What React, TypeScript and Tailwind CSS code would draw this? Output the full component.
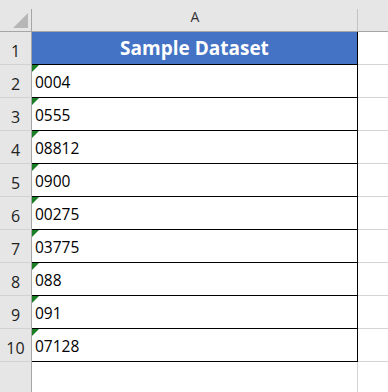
import React from "react";

const values = ["0004", "0555", "08812", "0900", "00275", "03775", "088", "091", "07128"];

function ErrorMark() {
  return (
    <svg className="absolute left-0 top-0" width="7" height="7" viewBox="0 0 7 7">
      <polygon points="0,0 7,0 0,7" fill="#1a7f24" />
    </svg>
  );
}

function RowHeader({ n }: { n: number }) {
  return (
    <div className="w-[32px] shrink-0 bg-[#e6e6e6] border-r border-r-[#a6a6a6] border-b border-b-[#d2d2d2] flex items-end justify-center pb-[3px] text-[16px] leading-[20px] text-[#222]">
      {n}
    </div>
  );
}

export default function App() {
  return (
    <div
      className="w-[388px] h-[392px] bg-white overflow-hidden flex flex-col"
      style={{ fontFamily: '"Open Sans", "Noto Sans", sans-serif' }}
    >
      {/* column headers */}
      <div className="flex h-[32px] shrink-0 bg-[#e6e6e6] border-b border-[#a6a6a6]">
        <div className="w-[32px] shrink-0 relative">
          <svg className="absolute left-0 top-0" width="32" height="31" viewBox="0 0 32 31">
            <polygon points="13,28 28,28 28,13" fill="#b6b6b6" />
          </svg>
          <div className="absolute right-0 top-[9px] bottom-0 w-px bg-[#a6a6a6]" />
        </div>
        <div className="w-[326px] shrink-0 relative flex items-center justify-center text-[14px] text-[#333] pt-[2px]">
          A
          <div className="absolute right-0 top-[9px] bottom-0 w-px bg-[#c4c4c4]" />
        </div>
        <div className="flex-1" />
      </div>

      {/* title row */}
      <div className="flex h-[33px] shrink-0">
        <RowHeader n={1} />
        <div className="w-[326px] shrink-0 bg-[#4472c4] border-r border-b border-black flex items-center justify-center text-white font-bold text-[19px] leading-[24px]">
          Sample Dataset
        </div>
        <div className="flex-1 border-b border-[#d4d4d4]" />
      </div>

      {/* data rows */}
      {values.map((v, i) => (
        <div key={v} className="flex h-[33px] shrink-0">
          <RowHeader n={i + 2} />
          <div className="w-[326px] shrink-0 relative border-r border-b border-black flex items-end pl-[3px] pb-[5px] text-[15.5px] leading-[20px] text-black">
            <ErrorMark />
            {v}
          </div>
          <div className="flex-1 border-b border-[#d4d4d4]" />
        </div>
      ))}

      {/* empty area below */}
      <div className="flex flex-1">
        <div className="w-[32px] shrink-0 bg-[#e6e6e6] border-r border-[#a6a6a6]" />
        <div className="w-[326px] shrink-0 border-r border-[#d4d4d4]" />
        <div className="flex-1" />
      </div>
    </div>
  );
}
